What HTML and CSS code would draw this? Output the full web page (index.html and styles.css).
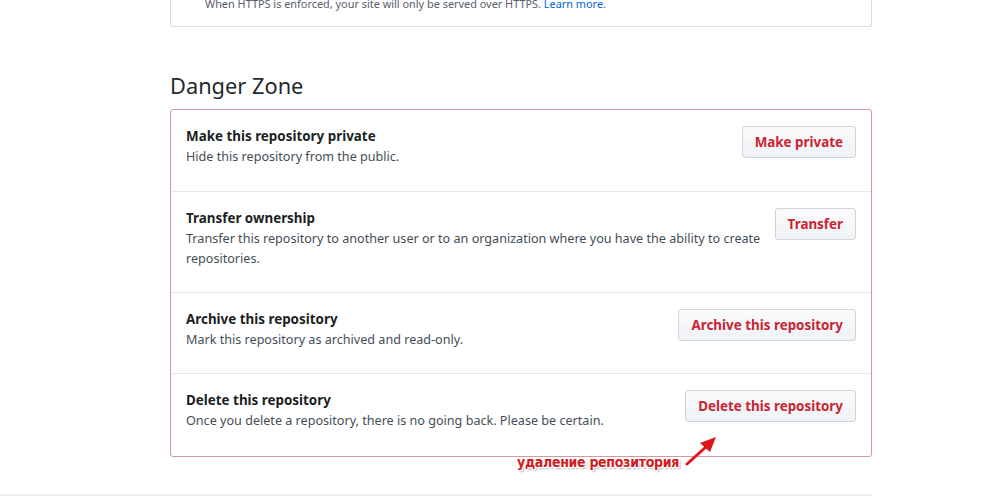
FILE: index.html
```html
<!DOCTYPE html>
<html lang="en">
<head>
<meta charset="utf-8">
<title>Danger Zone</title>
<link rel="stylesheet" href="styles.css">
</head>
<body>
<div class="page">
  <div class="top-box">
    <p class="note">When HTTPS is enforced, your site will only be served over HTTPS. <a href="#" class="link">Learn more</a>.</p>
  </div>

  <h2 class="subhead">Danger Zone</h2>

  <div class="danger-box">
    <div class="row">
      <div class="row-text">
        <strong class="row-title">Make this repository private</strong>
        <p class="row-desc">Hide this repository from the public.</p>
      </div>
      <button class="btn">Make private</button>
    </div>
    <div class="row">
      <div class="row-text">
        <strong class="row-title">Transfer ownership</strong>
        <p class="row-desc">Transfer this repository to another user or to an organization where you have the ability to create repositories.</p>
      </div>
      <button class="btn">Transfer</button>
    </div>
    <div class="row">
      <div class="row-text">
        <strong class="row-title">Archive this repository</strong>
        <p class="row-desc">Mark this repository as archived and read-only.</p>
      </div>
      <button class="btn">Archive this repository</button>
    </div>
    <div class="row">
      <div class="row-text">
        <strong class="row-title">Delete this repository</strong>
        <p class="row-desc">Once you delete a repository, there is no going back. Please be certain.</p>
      </div>
      <button class="btn">Delete this repository</button>
    </div>

    <div class="annotation">
      <span class="annotation-label">удаление репозитория</span>
      <svg class="annotation-arrow" width="36" height="32" viewBox="0 0 36 32">
        <path d="M2 30 L22 12" stroke="#e0141c" stroke-width="3" stroke-linecap="round" fill="none"/>
        <path d="M31 3 L15 9 L25 18 Z" fill="#e0141c"/>
      </svg>
    </div>
  </div>
</div>
<div class="footer-rule"></div>
</body>
</html>
```

FILE: styles.css
```css
* {
  box-sizing: border-box;
}

html, body {
  margin: 0;
  padding: 0;
  background: #ffffff;
}

body {
  font-family: "Noto Sans", "Open Sans", "DejaVu Sans", sans-serif;
  font-size: 13px;
  color: #24292e;
  overflow: hidden;
  height: 500px;
}

.page {
  width: 702px;
  margin-left: 170px;
}

.top-box {
  margin-top: -20px;
  border: 1px solid #dcdcdc;
  border-top: none;
  border-radius: 0 0 3px 3px;
  padding: 15px 16px 13px 34px;
  height: 47px;
}

.note {
  margin: 0;
  font-size: 10.9px;
  line-height: 18px;
  color: #586069;
}

.link {
  color: #0366d6;
  text-decoration: none;
}

.subhead {
  margin: 44px 0 8px;
  font-size: 21.8px;
  font-weight: 400;
  line-height: 30px;
  color: #24292e;
}

.danger-box {
  position: relative;
  border: 1px solid #cc9aa2;
  border-radius: 3px;
}

.row {
  display: flex;
  align-items: flex-start;
  justify-content: space-between;
  gap: 12px;
  padding: 16px 15px 23px 15px;
  border-top: 1px solid #e8e8e8;
}

.row:first-child {
  border-top: none;
  padding-bottom: 24px;
}

.row:nth-child(4) {
  padding-bottom: 25px;
}

.row-text {
  flex: 1;
  min-width: 0;
}

.row-title {
  display: block;
  font-weight: 700;
  font-size: 13.4px;
  line-height: 20px;
  color: #1b1f23;
}

.row-desc {
  margin: 1px 0 0;
  font-size: 12.6px;
  line-height: 20px;
  color: #444d56;
}

.btn {
  flex: none;
  height: 32px;
  padding: 0 12px;
  font-family: inherit;
  font-size: 13.4px;
  font-weight: 700;
  color: #cb2431;
  background: linear-gradient(#fafbfc, #eff3f6);
  border: 1px solid #d1d5da;
  border-radius: 3px;
  cursor: pointer;
}

.annotation {
  position: absolute;
  left: 346px;
  top: 324px;
  display: flex;
  align-items: flex-end;
}

.annotation-label {
  font-family: "Liberation Sans Narrow", "DejaVu Sans Condensed", "Liberation Sans", sans-serif;
  font-stretch: condensed;
  font-weight: 700;
  font-size: 14px;
  line-height: 16px;
  letter-spacing: -0.3px;
  color: #d11a22;
  text-shadow: 1px 1px 0 #fff, -1px -1px 0 #fff, 1px -1px 0 #fff, -1px 1px 0 #fff, 2px 2px 2px #b0b0b0;
  margin-bottom: 0;
}

.annotation-arrow {
  display: block;
  margin-left: 6px;
  margin-bottom: 4px;
}

.footer-rule {
  width: 872px;
  height: 2px;
  margin-top: 37px;
  background: #ececec;
}
```
